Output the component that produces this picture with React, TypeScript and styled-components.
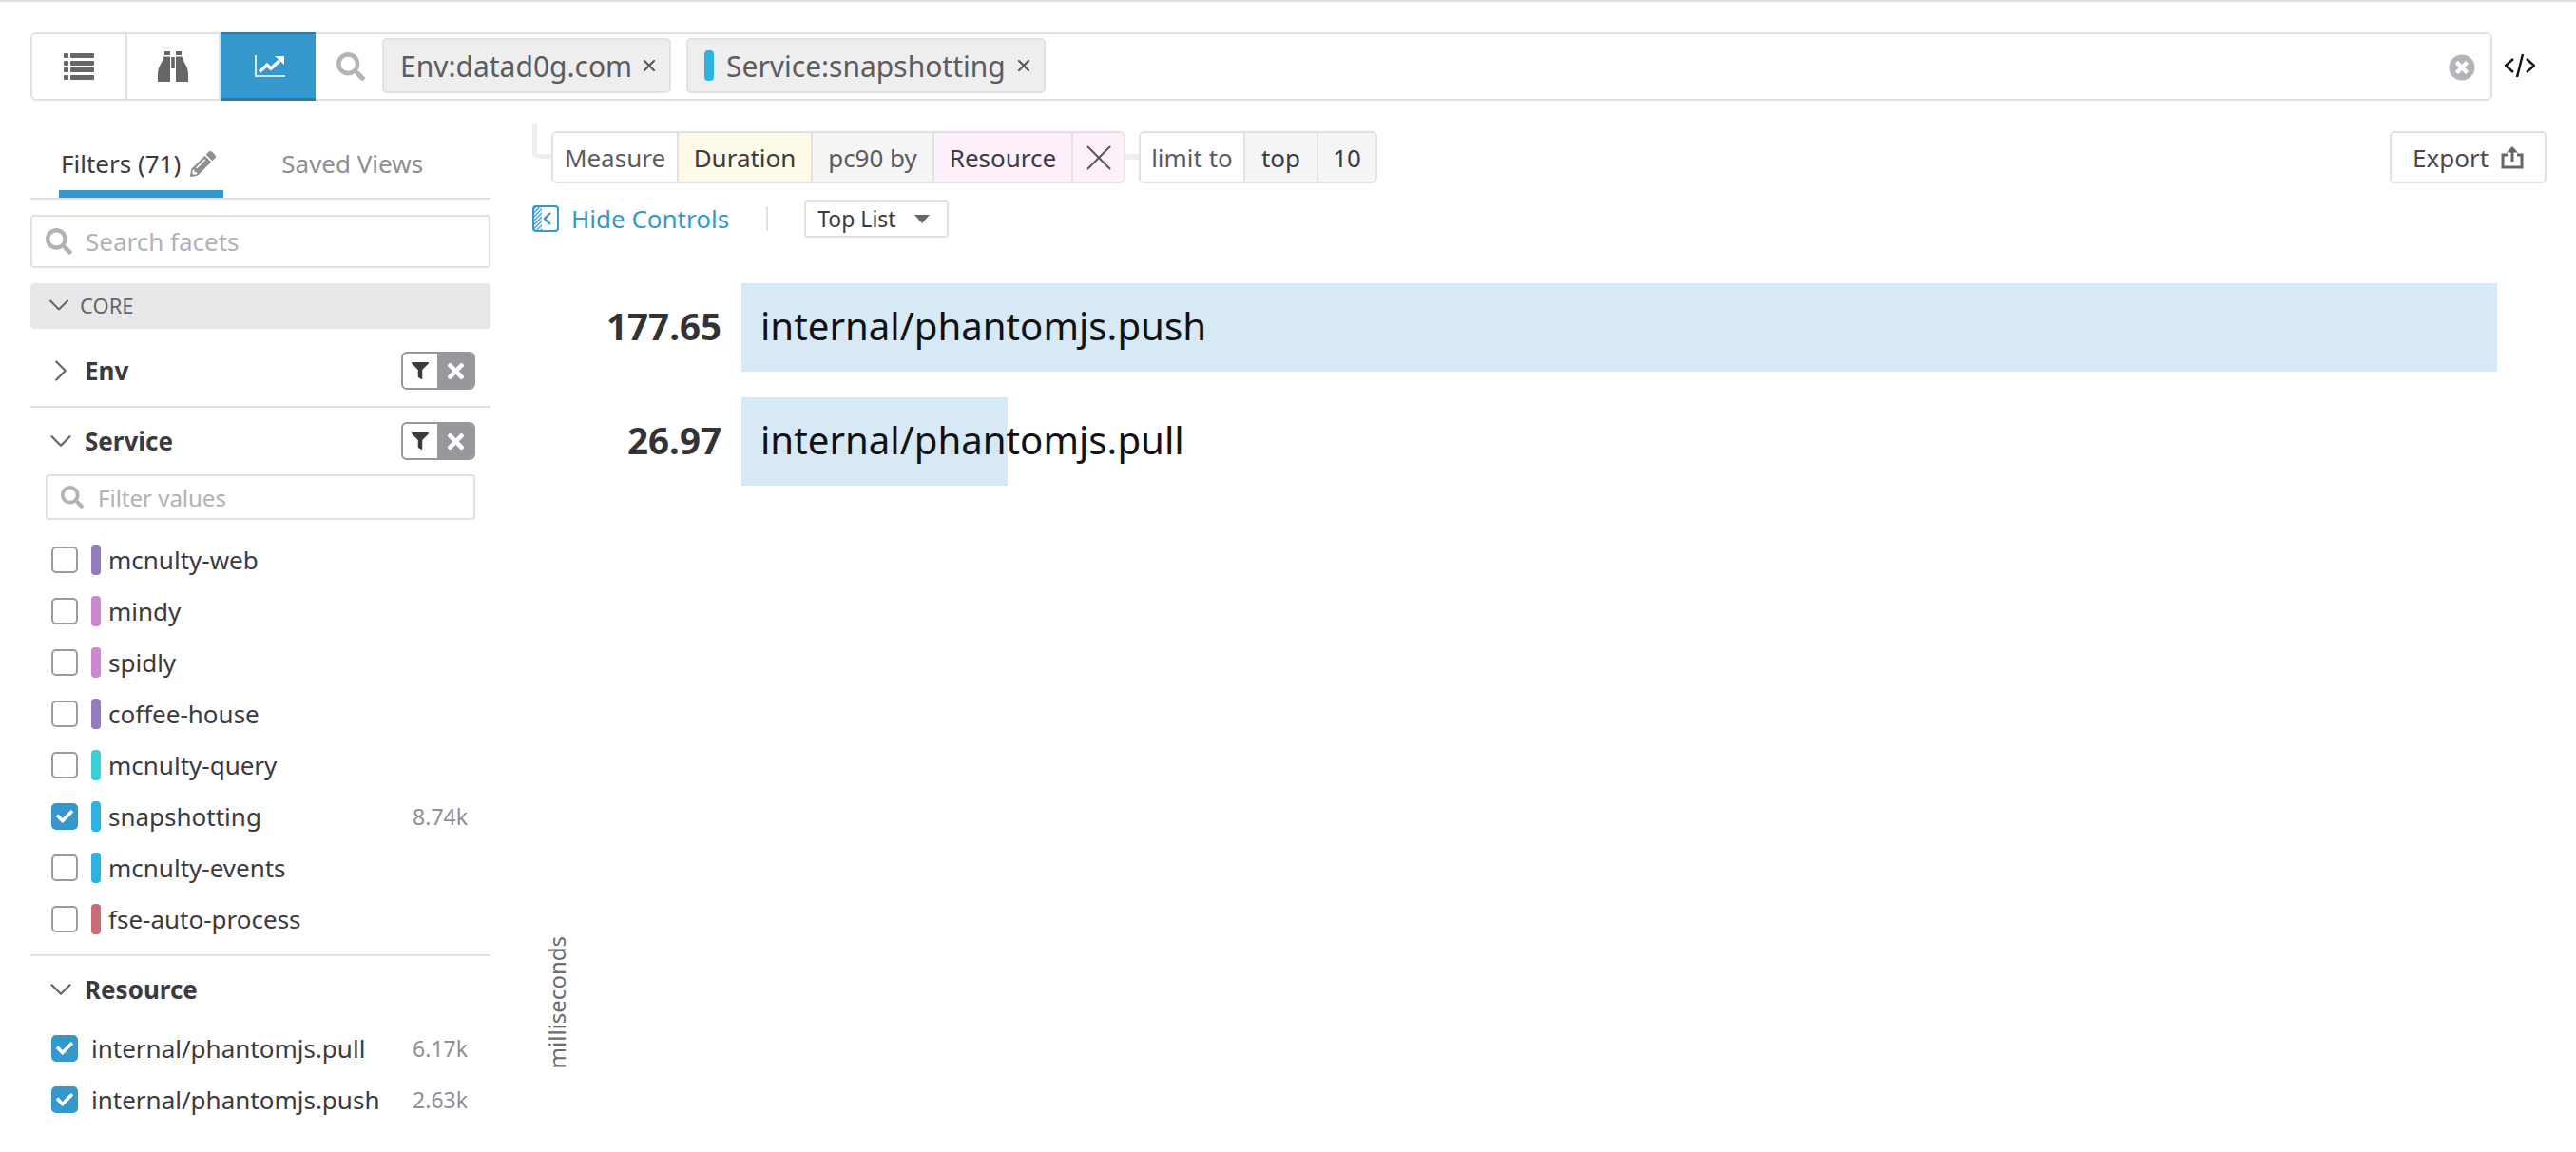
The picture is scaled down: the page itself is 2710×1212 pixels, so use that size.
import React from 'react'
import styled, { createGlobalStyle } from 'styled-components'
import { FaCheck, FaFilter, FaPencilAlt, FaSearch, FaTimes, FaTimesCircle } from 'react-icons/fa'
import { ChevronDown, ChevronRight, X } from 'lucide-react'

const GlobalStyle = createGlobalStyle`
  html, body {
    margin: 0;
    padding: 0;
    background: #ffffff;
    overflow: hidden;
  }
  body {
    font-family: "Noto Sans", "Open Sans", sans-serif;
    color: #3a3a40;
  }
`

const Page = styled.div`
  width: 2710px;
  height: 1212px;
  border-top: 2px solid #e0e0e6;
  box-sizing: border-box;
  overflow: hidden;
`

const SearchRow = styled.div`
  display: flex;
  align-items: center;
  margin: 32px 0 0 32px;
  height: 72px;
`

const SearchBar = styled.div`
  display: flex;
  align-items: stretch;
  width: 2590px;
  height: 72px;
  box-sizing: border-box;
  border: 2px solid #e0e0e6;
  border-radius: 6px;
`

const ViewButton = styled.div<{ $active?: boolean; $width: number }>`
  display: flex;
  align-items: center;
  justify-content: center;
  box-sizing: border-box;
  width: ${(p) => p.$width}px;
  margin: ${(p) => (p.$active ? '-2px 0' : '0')};
  padding-left: ${(p) => (p.$active ? '4px' : '0')};
  background: ${(p) => (p.$active ? '#3598cd' : 'transparent')};
  border-top: ${(p) => (p.$active ? '2px solid #2a7ba8' : '0')};
  border-bottom: ${(p) => (p.$active ? '3px solid #2a7ba8' : '0')};
  border-right: ${(p) => (p.$active ? '0' : '2px solid #e0e0e6')};
`

const SearchGlass = styled.div`
  display: flex;
  align-items: center;
  margin: 0 18px 0 22px;
  color: #b5b3b8;
  font-size: 30px;
`

const Chip = styled.div<{ $width: number }>`
  display: flex;
  align-items: center;
  box-sizing: border-box;
  width: ${(p) => p.$width}px;
  height: 58px;
  margin: 4px 16px 0 0;
  padding: 0 11px 0 17px;
  background: #eeeeef;
  border: 2px solid #e2e2e6;
  border-radius: 5px;
  font-size: 30px;
  color: #5c5c60;
  white-space: nowrap;
`

const ChipBar = styled.span`
  flex: none;
  width: 10px;
  height: 32px;
  margin-right: 13px;
  border-radius: 4px;
  background: #2db2e2;
`

const ChipClose = styled.span`
  display: flex;
  margin-left: auto;
  color: #5c5c60;
`

const ClearButton = styled.div`
  display: flex;
  align-items: center;
  margin-left: auto;
  margin-right: 16px;
  padding-top: 2px;
  color: #b5b3b8;
  font-size: 28px;
`

const CodeToggle = styled.svg`
  margin-left: 13px;
  margin-top: -3px;
`

const Body = styled.div`
  display: flex;
  align-items: flex-start;
  padding-left: 32px;
`

const Sidebar = styled.div`
  flex: none;
  width: 484px;
`

const Tabs = styled.div`
  display: flex;
  align-items: flex-end;
  height: 104px;
  box-sizing: border-box;
  padding-left: 30px;
  border-bottom: 2px solid #e0e0e6;
`

const Tab = styled.div<{ $active?: boolean }>`
  display: flex;
  align-items: center;
  gap: 10px;
  box-sizing: border-box;
  height: 58px;
  padding: 0 ${(p) => (p.$active ? '8px' : '0')} 6px 2px;
  margin-right: ${(p) => (p.$active ? '59px' : '0')};
  font-size: 26px;
  color: ${(p) => (p.$active ? '#3a3a40' : '#8e8e93')};
  border-bottom: 8px solid ${(p) => (p.$active ? '#3598cd' : 'transparent')};
`

const PencilIcon = styled.span`
  display: flex;
  color: #8e8e93;
  font-size: 27px;
`

const SearchBox = styled.div<{ $small?: boolean }>`
  display: flex;
  align-items: center;
  box-sizing: border-box;
  height: ${(p) => (p.$small ? '48px' : '56px')};
  margin: ${(p) => (p.$small ? '0 16px 15px 16px' : '16px 0 0')};
  padding-left: 14px;
  gap: ${(p) => (p.$small ? '15px' : '14px')};
  border: 2px solid #e0e0e6;
  border-radius: 4px;
  font-size: ${(p) => (p.$small ? '24px' : '26px')};
  color: #b3b1b6;
`

const Group = styled.div`
  display: flex;
  align-items: center;
  height: 48px;
  margin-top: 16px;
  padding: 0 0 2px 12px;
  box-sizing: border-box;
  gap: 4px;
  background: #e8e8ea;
  border-radius: 4px;
  font-size: 22px;
  color: #66666a;
`

const Facet = styled.div<{ $height: number; $divider?: boolean }>`
  display: flex;
  align-items: center;
  box-sizing: border-box;
  height: ${(p) => p.$height}px;
  padding: ${(p) => (p.$divider ? '7px' : '0')} 16px 0 13px;
  gap: 6px;
  font-size: 26px;
  font-weight: 700;
  color: #3a3a40;
  border-bottom: ${(p) => (p.$divider ? '2px solid #e0e0e6' : '0')};
`

const FacetName = styled.span`
  flex: 1;
`

const FacetButtons = styled.div`
  display: flex;
  width: 78px;
  height: 40px;
  box-sizing: border-box;
  border: 2px solid #98989c;
  border-radius: 6px;
  overflow: hidden;
`

const FacetFilter = styled.div`
  display: flex;
  align-items: center;
  justify-content: center;
  width: 36px;
  color: #3a3a40;
  font-size: 18px;
`

const FacetClear = styled.div`
  display: flex;
  align-items: center;
  justify-content: center;
  flex: 1;
  background: #98989c;
  color: #ffffff;
  font-size: 25px;
`

const ValueRow = styled.div`
  display: flex;
  align-items: center;
  height: 54px;
  padding: 0 24px 0 22px;
  font-size: 26px;
  color: #3a3a40;
`

const CheckBox = styled.div<{ $checked?: boolean }>`
  display: flex;
  flex: none;
  align-items: center;
  justify-content: center;
  box-sizing: border-box;
  width: 28px;
  height: 28px;
  margin-right: 14px;
  border-radius: 5px;
  border: ${(p) => (p.$checked ? '0' : '2.5px solid #9a9a9f')};
  background: ${(p) => (p.$checked ? '#3598cd' : '#ffffff')};
  color: #ffffff;
  font-size: 18px;
`

const ColorBar = styled.span<{ $color: string }>`
  flex: none;
  width: 10px;
  height: 32px;
  margin-right: 8px;
  border-radius: 4px;
  background: ${(p) => p.$color};
`

const ValueName = styled.span`
  flex: 1;
  white-space: nowrap;
`

const ValueCount = styled.span`
  font-size: 23px;
  color: #8e8e93;
`

const ListDivider = styled.div`
  height: 2px;
  margin-top: 10px;
  background: #e0e0e6;
`

const Main = styled.div`
  flex: none;
  width: 2119px;
  margin-left: 44px;
`

const QueryRow = styled.div`
  display: flex;
  align-items: flex-start;
  height: 55px;
  margin-top: 32px;
`

const QueryElbow = styled.div`
  flex: none;
  width: 15px;
  height: 32px;
  margin-top: -8px;
  border-left: 5px solid #eeeeef;
  border-bottom: 5px solid #eeeeef;
  border-bottom-left-radius: 6px;
`

const QueryGroup = styled.div`
  display: flex;
  height: 55px;
  box-sizing: border-box;
  border: 2px solid #e0e0e6;
  border-radius: 6px;
  overflow: hidden;
  font-size: 26px;
`

const QueryCell = styled.div<{ $width: number; $bg?: string; $muted?: boolean }>`
  display: flex;
  flex: none;
  align-items: center;
  justify-content: center;
  box-sizing: border-box;
  width: ${(p) => p.$width}px;
  background: ${(p) => p.$bg || '#ffffff'};
  color: ${(p) => (p.$muted ? '#5c5c60' : '#3a3a40')};
  border-right: 2px solid #e0e0e6;

  &:last-child {
    border-right: 0;
  }

  svg {
    flex: none;
  }
`

const QueryLink = styled.div`
  flex: none;
  width: 14px;
  height: 6px;
  margin-top: 24px;
  background: #eeeeef;
`

const ExportButton = styled.div`
  display: flex;
  align-items: center;
  justify-content: center;
  gap: 13px;
  box-sizing: border-box;
  width: 165px;
  height: 55px;
  margin-left: auto;
  border: 2px solid #e0e0e6;
  border-radius: 5px;
  font-size: 26px;
  color: #4a4a4e;
`

const ControlsRow = styled.div`
  display: flex;
  align-items: center;
  height: 40px;
  margin-top: 17px;
`

const HideControls = styled.div`
  display: flex;
  align-items: center;
  gap: 13px;
  font-size: 26px;
  color: #3598cd;
`

const Separator = styled.div`
  width: 2px;
  height: 26px;
  margin: 0 38px 0 39px;
  background: #e0e0e6;
`

const ViewSelect = styled.div`
  display: flex;
  align-items: center;
  justify-content: space-between;
  box-sizing: border-box;
  width: 152px;
  height: 40px;
  padding: 0 18px 0 12px;
  border: 2px solid #e0e0e6;
  border-radius: 4px;
  font-size: 23px;
  color: #3a3a40;
`

const SelectCaret = styled.span`
  width: 0;
  height: 0;
  border-left: 8px solid transparent;
  border-right: 8px solid transparent;
  border-top: 9px solid #66666a;
`

const Chart = styled.div`
  display: flex;
  flex-direction: column;
  justify-content: space-between;
  height: 826px;
  margin-top: 48px;
`

const BarList = styled.div`
  display: flex;
  flex-direction: column;
  gap: 27px;
`

const BarRow = styled.div`
  display: grid;
  grid-template-columns: 199px 1847px;
  column-gap: 21px;
  align-items: stretch;
  height: 93px;
`

const BarValue = styled.div`
  display: flex;
  align-items: center;
  justify-content: flex-end;
  padding-bottom: 4px;
  font-size: 38.5px;
  font-weight: 700;
  color: #333336;
`

const BarTrack = styled.div`
  display: grid;
  align-items: center;
`

const BarFill = styled.div`
  grid-area: 1 / 1;
  height: 100%;
  background: #d6e9f5;
`

const BarLabel = styled.div`
  grid-area: 1 / 1;
  padding: 0 0 5px 20px;
  font-size: 40.2px;
  color: #111114;
`

const AxisLabel = styled.div`
  align-self: flex-start;
  margin-left: 11px;
  writing-mode: vertical-rl;
  transform: rotate(180deg);
  font-size: 24px;
  line-height: 30px;
  color: #6b6b70;
`

const services = [
  { name: 'mcnulty-web', color: '#937cbe' },
  { name: 'mindy', color: '#cb8ad0' },
  { name: 'spidly', color: '#cb8ad0' },
  { name: 'coffee-house', color: '#937cbe' },
  { name: 'mcnulty-query', color: '#3dd0d8' },
  { name: 'snapshotting', color: '#2db2e2', checked: true, count: '8.74k' },
  { name: 'mcnulty-events', color: '#2db2e2' },
  { name: 'fse-auto-process', color: '#c96a74' }
]

const resources = [
  { name: 'internal/phantomjs.pull', count: '6.17k' },
  { name: 'internal/phantomjs.push', count: '2.63k' }
]

const bars = [
  { label: 'internal/phantomjs.push', value: 177.65 },
  { label: 'internal/phantomjs.pull', value: 26.97 }
]

const ListIcon = () => (
  <svg width="32" height="28" viewBox="0 0 32 28" fill="#666669">
    <rect x="0" y="0" width="5" height="5" rx="1" />
    <rect x="7" y="0" width="25" height="5" rx="1" />
    <rect x="0" y="8" width="5" height="5" rx="1" />
    <rect x="7" y="8" width="25" height="5" rx="1" />
    <rect x="0" y="15" width="5" height="5" rx="1" />
    <rect x="7" y="15" width="25" height="5" rx="1" />
    <rect x="0" y="23" width="5" height="5" rx="1" />
    <rect x="7" y="23" width="25" height="5" rx="1" />
  </svg>
)

const BinocularsIcon = () => (
  <svg width="32" height="32" viewBox="0 0 32 32" fill="#666669">
    <rect x="7" y="0" width="6" height="4" />
    <rect x="19" y="0" width="6" height="4" />
    <rect x="14.2" y="6" width="3.6" height="12" />
    <path d="M6.5 5.5H13V32H0V24C0 16 4.5 13 6.5 5.5z" />
    <path d="M25.5 5.5H19V32H32V24C32 16 27.5 13 25.5 5.5z" />
  </svg>
)

const ChartIcon = () => (
  <svg width="32" height="23" viewBox="0 0 32 23" fill="none">
    <path d="M1 0V22H32" stroke="#ffffff" strokeWidth="1.6" />
    <path d="M5 17.5L13 10.5L17 14L26 6" stroke="#ffffff" strokeWidth="3.6" />
    <path d="M21 1H31V10z" fill="#ffffff" />
  </svg>
)

const HideIcon = () => (
  <svg width="28" height="28" viewBox="0 0 28 28" fill="none">
    <defs>
      <pattern id="hatch" width="3" height="3" patternUnits="userSpaceOnUse" patternTransform="rotate(45)">
        <rect width="1.4" height="3" fill="#3598cd" />
      </pattern>
    </defs>
    <rect x="2" y="2" width="8" height="24" fill="url(#hatch)" />
    <rect x="1" y="1" width="26" height="26" rx="3" stroke="#3598cd" strokeWidth="2" />
    <path d="M19 8l-6 6 6 6" stroke="#3598cd" strokeWidth="2.4" />
  </svg>
)

const ShareIcon = () => (
  <svg width="24" height="25" viewBox="0 0 24 25" fill="none" stroke="#66666a" strokeWidth="3">
    <path d="M7 10H2v13h20V10h-5" />
    <path d="M12 17V3" />
    <path d="M12 1l6 6.5H6z" fill="#66666a" stroke="none" />
  </svg>
)

const FacetActions = () => (
  <FacetButtons>
    <FacetFilter>
      <FaFilter />
    </FacetFilter>
    <FacetClear>
      <FaTimes />
    </FacetClear>
  </FacetButtons>
)

export default function App() {
  const maxValue = Math.max(...bars.map((b) => b.value))

  return (
    <Page>
      <GlobalStyle />
      <SearchRow>
        <SearchBar>
          <ViewButton $width={100}>
            <ListIcon />
          </ViewButton>
          <ViewButton $width={98}>
            <BinocularsIcon />
          </ViewButton>
          <ViewButton $width={100} $active>
            <ChartIcon />
          </ViewButton>
          <SearchGlass>
            <FaSearch />
          </SearchGlass>
          <Chip $width={304}>
            Env:datad0g.com
            <ChipClose>
              <X size={20} strokeWidth={2.8} />
            </ChipClose>
          </Chip>
          <Chip $width={378}>
            <ChipBar />
            Service:snapshotting
            <ChipClose>
              <X size={20} strokeWidth={2.8} />
            </ChipClose>
          </Chip>
          <ClearButton>
            <FaTimesCircle />
          </ClearButton>
        </SearchBar>
        <CodeToggle width="32" height="26" viewBox="0 0 32 26" fill="none" stroke="#111114" strokeWidth="2.4">
          <path d="M9 6l-8 7 8 7" />
          <path d="M23 6l8 7-8 7" />
          <path d="M19 1l-6 24" />
        </CodeToggle>
      </SearchRow>

      <Body>
        <Sidebar>
          <Tabs>
            <Tab $active>
              Filters (71)
              <PencilIcon>
                <FaPencilAlt />
              </PencilIcon>
            </Tab>
            <Tab>Saved Views</Tab>
          </Tabs>
          <SearchBox>
            <FaSearch size={28} />
            Search facets
          </SearchBox>
          <Group>
            <ChevronDown size={36} strokeWidth={1.4} />
            CORE
          </Group>
          <Facet $height={83} $divider>
            <ChevronRight size={38} strokeWidth={1.4} color="#66666a" />
            <FacetName>Env</FacetName>
            <FacetActions />
          </Facet>
          <Facet $height={70}>
            <ChevronDown size={38} strokeWidth={1.4} color="#66666a" />
            <FacetName>Service</FacetName>
            <FacetActions />
          </Facet>
          <SearchBox $small>
            <FaSearch size={24} />
            Filter values
          </SearchBox>
          {services.map((s) => (
            <ValueRow key={s.name}>
              <CheckBox $checked={s.checked}>{s.checked && <FaCheck />}</CheckBox>
              <ColorBar $color={s.color} />
              <ValueName>{s.name}</ValueName>
              {s.count && <ValueCount>{s.count}</ValueCount>}
            </ValueRow>
          ))}
          <ListDivider />
          <Facet $height={70}>
            <ChevronDown size={38} strokeWidth={1.4} color="#66666a" />
            <FacetName>Resource</FacetName>
          </Facet>
          {resources.map((r) => (
            <ValueRow key={r.name}>
              <CheckBox $checked>
                <FaCheck />
              </CheckBox>
              <ValueName>{r.name}</ValueName>
              <ValueCount>{r.count}</ValueCount>
            </ValueRow>
          ))}
        </Sidebar>

        <Main>
          <QueryRow>
            <QueryElbow />
            <QueryGroup>
              <QueryCell $width={132} $muted>Measure</QueryCell>
              <QueryCell $width={141} $bg="#fefae8">Duration</QueryCell>
              <QueryCell $width={128} $bg="#f5f5f5" $muted>pc90 by</QueryCell>
              <QueryCell $width={146} $bg="#fdf0fa">Resource</QueryCell>
              <QueryCell $width={53} $bg="#fdf0fa" $muted>
                <X size={46} strokeWidth={1.1} />
              </QueryCell>
            </QueryGroup>
            <QueryLink />
            <QueryGroup>
              <QueryCell $width={110} $muted>limit to</QueryCell>
              <QueryCell $width={77} $bg="#f5f5f5">top</QueryCell>
              <QueryCell $width={60} $bg="#f5f5f5">10</QueryCell>
            </QueryGroup>
            <ExportButton>
              Export
              <ShareIcon />
            </ExportButton>
          </QueryRow>

          <ControlsRow>
            <HideControls>
              <HideIcon />
              Hide Controls
            </HideControls>
            <Separator />
            <ViewSelect>
              Top List
              <SelectCaret />
            </ViewSelect>
          </ControlsRow>

          <Chart>
            <BarList>
              {bars.map((b) => (
                <BarRow key={b.label}>
                  <BarValue>{b.value}</BarValue>
                  <BarTrack>
                    <BarFill style={{ width: `${(b.value / maxValue) * 100}%` }} />
                    <BarLabel>{b.label}</BarLabel>
                  </BarTrack>
                </BarRow>
              ))}
            </BarList>
            <AxisLabel>milliseconds</AxisLabel>
          </Chart>
        </Main>
      </Body>
    </Page>
  )
}
